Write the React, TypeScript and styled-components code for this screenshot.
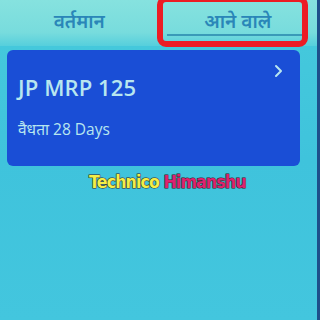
import React from "react";
import styled, { createGlobalStyle } from "styled-components";

const Global = createGlobalStyle`
  html, body { margin: 0; padding: 0; }
  body { width: 320px; height: 320px; overflow: hidden; }
`;

const Screen = styled.div`
  position: relative;
  width: 320px;
  height: 320px;
  box-sizing: border-box;
  background: linear-gradient(180deg, #46cadc 0%, #3fc3dc 50%, #43c6de 100%);
  border-right: 3px solid #1e4f8a;
  font-family: "Noto Sans", "Open Sans", sans-serif;
  overflow: hidden;
`;

const TabBar = styled.div`
  display: flex;
  height: 46px;
  background: linear-gradient(180deg, #86e2df 0%, #78dcdd 70%, #56cfdc 100%);
`;

const Tab = styled.div<{ $active?: boolean }>`
  position: relative;
  flex: 1;
  display: flex;
  justify-content: center;
  padding-top: 8px;
  box-sizing: border-box;
  font-size: 19px;
  font-weight: 600;
  color: #2a86b8;
  ${(p) =>
    p.$active &&
    `
    &::after {
      content: "";
      position: absolute;
      left: 8px;
      right: 12px;
      top: 34px;
      height: 2px;
      background: #3a9ab8;
    }
  `}
`;

const Highlight = styled.div`
  position: absolute;
  left: 157px;
  top: -4px;
  width: 151px;
  height: 51px;
  box-sizing: border-box;
  border: 6px solid #ec1c24;
  border-radius: 9px;
`;

const Card = styled.div`
  position: relative;
  margin: 4px 17px 0 7px;
  height: 116px;
  box-sizing: border-box;
  background: #1a4ed6;
  border-radius: 6px;
  padding: 22px 12px 0 11px;
  display: flex;
  flex-direction: column;
  color: #b8e6ef;
`;

const Title = styled.div`
  font-family: "Open Sans", "Noto Sans", sans-serif;
  font-size: 22px;
  font-weight: 600;
  letter-spacing: 0.1px;
`;

const Validity = styled.div`
  margin-top: 16px;
  font-size: 15.5px;
  font-family: "Open Sans", "Noto Sans", sans-serif;
`;

const Chevron = styled.svg`
  position: absolute;
  right: 16px;
  top: 14px;
`;

const Watermark = styled.div`
  display: flex;
  justify-content: center;
  gap: 5px;
  margin-top: 5px;
  padding-left: 20px;
  font-family: "DejaVu Sans", "Liberation Sans", sans-serif;
  font-weight: 900;
  font-size: 18px;
  letter-spacing: -1px;
  transform: scaleX(0.88);
  -webkit-text-stroke: 1px #3a3030;
  paint-order: stroke fill;
`;

const Word = styled.span<{ $color: string }>`
  color: ${(p) => p.$color};
  text-shadow: 0 0 1px #302020;
`;

export default function App() {
  return (
    <Screen>
      <Global />
      <TabBar>
        <Tab>वर्तमान</Tab>
        <Tab $active>आने वाले</Tab>
      </TabBar>
      <Highlight />
      <Card>
        <Title>JP MRP 125</Title>
        <Validity>वैधता 28 Days</Validity>
        <Chevron width="10" height="14" viewBox="0 0 10 14">
          <path d="M2 2 L7 7 L2 12" fill="none" stroke="#b8e6ef" strokeWidth="2" strokeLinecap="round" strokeLinejoin="round" />
        </Chevron>
      </Card>
      <Watermark>
        <Word $color="#f2ee48">Technico</Word>
        <Word $color="#de2270">Himanshu</Word>
      </Watermark>
    </Screen>
  );
}
